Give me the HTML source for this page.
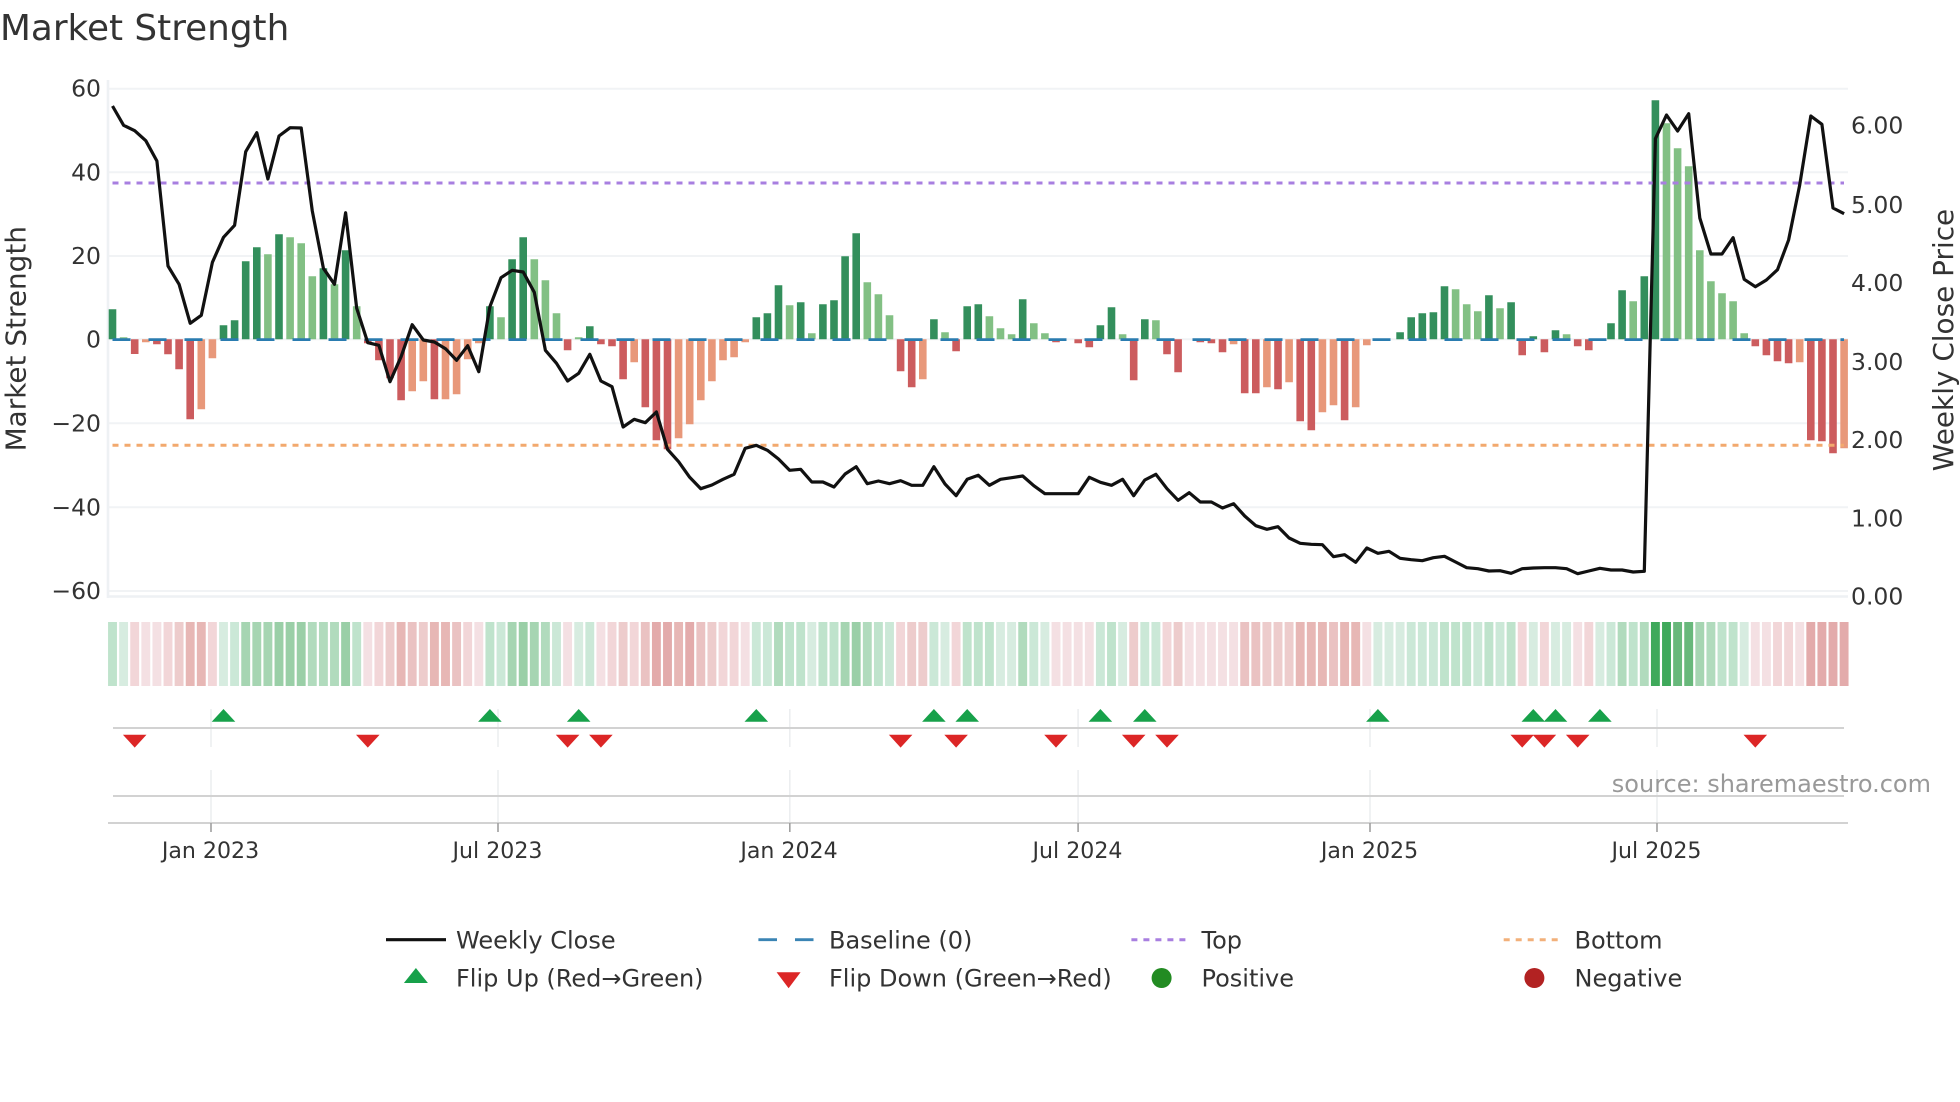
<!DOCTYPE html>
<html lang="en"><head><meta charset="utf-8"><title>Market Strength</title>
<style>
html,body{margin:0;padding:0;background:#fff;width:1960px;height:1102px;overflow:hidden}
svg{display:block}
text{font-family:"DejaVu Sans","Liberation Sans",sans-serif;fill:#333}
.y{font-size:23.5px}
.x{font-size:22.1px;text-anchor:middle}
.l{font-size:24px}
.bar,.heat,.zero{fill:none}
</style></head><body>
<svg width="1960" height="1102" viewBox="0 0 1960 1102" xmlns="http://www.w3.org/2000/svg">
<rect width="1960" height="1102" fill="#fff"/>
<text x="0" y="40" font-size="35.8">Market Strength</text>

<!-- grid -->
<path d="M108 88.7H1848M108 172.3H1848M108 256H1848M108 339.3H1848M108 423.3H1848M108 507.3H1848M108 591H1848" stroke="#f1f3f5" stroke-width="2" fill="none"/>
<path d="M108 80V598M107 596.5H1848" stroke="#eef1f4" stroke-width="2.6" fill="none"/>

<!-- bars -->
<path class="bar" stroke-width="7.6" stroke="#338f5c" d="M112.5 339.3v-30M223.5 339.3v-14M234.6 339.3v-19M245.7 339.3v-78M256.8 339.3v-92M279 339.3v-105M323.4 339.3v-71M345.6 339.3v-89M489.9 339.3v-33M512.1 339.3v-80M523.2 339.3v-102M589.8 339.3v-13M756.3 339.3v-22M767.4 339.3v-26M778.5 339.3v-54M800.7 339.3v-37M822.9 339.3v-35M834 339.3v-39M845.1 339.3v-83M856.2 339.3v-106M933.9 339.3v-20M967.2 339.3v-33M978.3 339.3v-35M1022.7 339.3v-40M1100.4 339.3v-14M1111.5 339.3v-32M1144.8 339.3v-20M1400.1 339.3v-7M1411.2 339.3v-22M1422.3 339.3v-26M1433.4 339.3v-27M1444.5 339.3v-53M1488.9 339.3v-44M1511.1 339.3v-37M1533.3 339.3v-3M1555.5 339.3v-9M1611 339.3v-16M1622.1 339.3v-49M1644.3 339.3v-63M1655.4 339.3v-239"/>
<path class="bar" stroke-width="7.6" stroke="#82c084" d="M123.6 339.3v-2M267.9 339.3v-85M290.1 339.3v-102M301.2 339.3v-96M312.3 339.3v-63M334.5 339.3v-55M356.7 339.3v-33M501 339.3v-22M534.3 339.3v-80M545.4 339.3v-59M556.5 339.3v-26M578.7 339.3v-2M789.6 339.3v-34M811.8 339.3v-6M867.3 339.3v-57M878.4 339.3v-45M889.5 339.3v-24M945 339.3v-7M989.4 339.3v-23M1000.5 339.3v-11M1011.6 339.3v-5M1033.8 339.3v-16M1044.9 339.3v-6M1122.6 339.3v-5M1155.9 339.3v-19M1455.6 339.3v-50M1466.7 339.3v-35M1477.8 339.3v-28M1500 339.3v-31M1566.6 339.3v-5M1633.2 339.3v-38M1666.5 339.3v-216M1677.6 339.3v-191M1688.7 339.3v-173M1699.8 339.3v-89M1710.9 339.3v-58M1722 339.3v-46M1733.1 339.3v-38M1744.2 339.3v-6"/>
<path class="bar" stroke-width="7.6" stroke="#cc5c5e" d="M134.7 339.3v14.7M156.9 339.3v5M168 339.3v15M179.1 339.3v30M190.2 339.3v80M367.8 339.3v4M378.9 339.3v21M390 339.3v39M401.1 339.3v61M434.4 339.3v60M567.6 339.3v11M600.9 339.3v5M612 339.3v7M623.1 339.3v40M645.3 339.3v68M656.4 339.3v101M667.5 339.3v110M900.6 339.3v32M911.7 339.3v48M956.1 339.3v12M1056 339.3v3M1078.2 339.3v4M1089.3 339.3v8M1133.7 339.3v41M1167 339.3v15M1178.1 339.3v33M1200.3 339.3v3M1211.4 339.3v4M1222.5 339.3v13M1244.7 339.3v54M1255.8 339.3v54M1278 339.3v50M1300.2 339.3v82M1311.3 339.3v91M1344.6 339.3v81M1522.2 339.3v16M1544.4 339.3v13M1577.7 339.3v7M1588.8 339.3v11M1755.3 339.3v7M1766.4 339.3v16M1777.5 339.3v22M1788.6 339.3v24M1810.8 339.3v101M1821.9 339.3v102M1833 339.3v114"/>
<path class="bar" stroke-width="7.6" stroke="#e8987a" d="M145.8 339.3v3M201.3 339.3v70M212.4 339.3v19M412.2 339.3v52M423.3 339.3v42M445.5 339.3v60M456.6 339.3v55M467.7 339.3v20M478.8 339.3v4M634.2 339.3v23M678.6 339.3v99M689.7 339.3v85M700.8 339.3v61M711.9 339.3v42M723 339.3v21M734.1 339.3v18M745.2 339.3v3M922.8 339.3v40M1233.6 339.3v5M1266.9 339.3v48M1289.1 339.3v43M1322.4 339.3v73M1333.5 339.3v66M1355.7 339.3v68M1366.8 339.3v6M1799.7 339.3v23M1844.1 339.3v109"/>

<!-- baseline / top / bottom -->
<path class="zero" d="M112.5 339.6H1844" stroke="#2a7cb0" stroke-width="2.8" stroke-dasharray="18 18"/>
<path d="M112.5 183H1844" fill="none" stroke="#a87fe0" stroke-width="3" stroke-dasharray="6 6"/>
<path d="M112.5 445.3H1844" fill="none" stroke="#f2a96e" stroke-width="3" stroke-dasharray="6 6"/>

<!-- weekly close -->
<polyline fill="none" stroke="#111" stroke-width="3.2" stroke-linejoin="round" points="112.5,106 123.6,125.3 134.7,130.7 145.8,140.7 156.9,161 168,266 179.1,284.3 190.2,323.3 201.3,315.3 212.4,262.3 223.5,237.3 234.6,225.3 245.7,151.7 256.8,132.7 267.9,179 279,136 290.1,127.7 301.2,128 312.3,211 323.4,268.3 334.5,284.3 345.6,212.7 356.7,308.3 367.8,342.7 378.9,345.3 390,381.7 401.1,356.7 412.2,324.7 423.3,340 434.4,342 445.5,348.7 456.6,360.3 467.7,345.7 478.8,371.7 489.9,306.7 501,277.7 512.1,270.3 523.2,272 534.3,292.3 545.4,350.3 556.5,363.3 567.6,381 578.7,373.3 589.8,354.3 600.9,381 612,386.7 623.1,427 634.2,419.3 645.3,422.7 656.4,412 667.5,449.3 678.6,461.7 689.7,477.3 700.8,488.7 711.9,485 723,479.3 734.1,474.3 745.2,448.3 756.3,445.3 767.4,450.3 778.5,459 789.6,470.3 800.7,469.3 811.8,482 822.9,482 834,487 845.1,474 856.2,466.7 867.3,483.7 878.4,481 889.5,483.7 900.6,480.7 911.7,485.3 922.8,485.3 933.9,466.7 945,484 956.1,495.7 967.2,479.3 978.3,475.3 989.4,485.3 1000.5,479.3 1011.6,477.7 1022.7,476 1033.8,485.7 1044.9,493.7 1056,493.7 1067.1,493.7 1078.2,493.7 1089.3,477.3 1100.4,482.3 1111.5,485.3 1122.6,479.3 1133.7,495.7 1144.8,480 1155.9,474.3 1167,488.7 1178.1,500.3 1189.2,492.7 1200.3,502 1211.4,502 1222.5,508 1233.6,503.7 1244.7,516 1255.8,525.7 1266.9,529.3 1278,526.7 1289.1,538 1300.2,543.3 1311.3,544.3 1322.4,544.7 1333.5,556.7 1344.6,554.7 1355.7,562.3 1366.8,548 1377.9,553.3 1389,551.3 1400.1,558.3 1411.2,559.7 1422.3,560.7 1433.4,557.7 1444.5,556.3 1455.6,562 1466.7,567.7 1477.8,568.7 1488.9,571 1500,570.7 1511.1,573.3 1522.2,568.7 1533.3,568 1544.4,567.7 1555.5,567.7 1566.6,568.7 1577.7,573.7 1588.8,571 1599.9,568.3 1611,570 1622.1,570 1633.2,572 1644.3,571.3 1655.4,138.7 1666.5,115 1677.6,131 1688.7,113.7 1699.8,218 1710.9,254 1722,254 1733.1,237.7 1744.2,279.3 1755.3,286.7 1766.4,280 1777.5,269.7 1788.6,240 1799.7,185 1810.8,116 1821.9,124.3 1833,208 1844.1,213.7"/>

<!-- y ticks -->
<g class="y" text-anchor="end">
<text x="101" y="96.7">60</text><text x="101" y="180.3">40</text><text x="101" y="264">20</text><text x="101" y="347.3">0</text><text x="101" y="431.3">−20</text><text x="101" y="515.3">−40</text><text x="101" y="598.8">−60</text>
</g>
<g class="y">
<text x="1851" y="133.5">6.00</text><text x="1851" y="212.8">5.00</text><text x="1851" y="290.8">4.00</text><text x="1851" y="370.2">3.00</text><text x="1851" y="447.8">2.00</text><text x="1851" y="526.5">1.00</text><text x="1851" y="604.5">0.00</text>
</g>
<text transform="translate(25.5 338.7) rotate(-90)" text-anchor="middle" font-size="27.9">Market Strength</text>
<text transform="translate(1953 340) rotate(-90)" text-anchor="middle" font-size="27.9">Weekly Close Price</text>

<!-- heat strip -->
<g class="heat" stroke-width="8.9">
<g opacity="0.9">
<path stroke="#d3ebdd" d="M123.6 622V686M223.5 622V686M578.7 622V686M811.8 622V686M945 622V686M1000.5 622V686M1011.6 622V686M1044.9 622V686M1122.6 622V686M1377.9 622V686M1389 622V686M1400.1 622V686M1533.3 622V686M1555.5 622V686M1566.6 622V686M1599.9 622V686M1744.2 622V686"/>
<path stroke="#c6e6d3" d="M234.6 622V686M501 622V686M556.5 622V686M589.8 622V686M756.3 622V686M767.4 622V686M889.5 622V686M933.9 622V686M1033.8 622V686M1100.4 622V686M1144.8 622V686M1155.9 622V686M1411.2 622V686M1422.3 622V686M1433.4 622V686M1477.8 622V686M1500 622V686M1611 622V686"/>
<path stroke="#b9e0c7" d="M112.5 622V686M356.7 622V686M489.9 622V686M789.6 622V686M800.7 622V686M822.9 622V686M834 622V686M878.4 622V686M967.2 622V686M978.3 622V686M989.4 622V686M1111.5 622V686M1444.5 622V686M1455.6 622V686M1466.7 622V686M1488.9 622V686M1511.1 622V686M1633.2 622V686M1722 622V686M1733.1 622V686"/>
<path stroke="#a9d8b6" d="M312.3 622V686M323.4 622V686M334.5 622V686M545.4 622V686M778.5 622V686M867.3 622V686M1022.7 622V686M1622.1 622V686M1644.3 622V686M1710.9 622V686"/>
<path stroke="#9dd1aa" d="M245.7 622V686M256.8 622V686M267.9 622V686M512.1 622V686M534.3 622V686M845.1 622V686M1699.8 622V686"/>
<path stroke="#90ca9e" d="M279 622V686M290.1 622V686M301.2 622V686M345.6 622V686M523.2 622V686M856.2 622V686"/>
<path stroke="#f3dde0" d="M145.8 622V686M156.9 622V686M367.8 622V686M478.8 622V686M567.6 622V686M600.9 622V686M745.2 622V686M1056 622V686M1067.1 622V686M1078.2 622V686M1089.3 622V686M1189.2 622V686M1200.3 622V686M1211.4 622V686M1222.5 622V686M1233.6 622V686M1366.8 622V686M1577.7 622V686M1755.3 622V686M1766.4 622V686M1799.7 622V686"/>
<path stroke="#f1d2d4" d="M134.7 622V686M168 622V686M212.4 622V686M378.9 622V686M467.7 622V686M612 622V686M634.2 622V686M723 622V686M734.1 622V686M900.6 622V686M956.1 622V686M1167 622V686M1522.2 622V686M1544.4 622V686M1588.8 622V686M1777.5 622V686M1788.6 622V686"/>
<path stroke="#ecc7c7" d="M179.1 622V686M390 622V686M423.3 622V686M623.1 622V686M711.9 622V686M911.7 622V686M922.8 622V686M1133.7 622V686M1178.1 622V686M1266.9 622V686M1278 622V686M1289.1 622V686"/>
<path stroke="#e8bcbc" d="M412.2 622V686M456.6 622V686M645.3 622V686M700.8 622V686M1244.7 622V686M1255.8 622V686M1333.5 622V686"/>
<path stroke="#e5b0ae" d="M190.2 622V686M201.3 622V686M401.1 622V686M434.4 622V686M445.5 622V686M678.6 622V686M1300.2 622V686M1311.3 622V686M1322.4 622V686M1344.6 622V686M1355.7 622V686"/>
<path stroke="#e0a3a2" d="M656.4 622V686M667.5 622V686M689.7 622V686M1810.8 622V686M1821.9 622V686M1833 622V686M1844.1 622V686"/>
</g>
<path stroke="#68b87b" d="M1677.6 622V686M1688.7 622V686"/>
<path stroke="#3fa95b" d="M1655.4 622V686M1666.5 622V686"/>
</g>

<!-- marker panel -->
<path d="M211 709V747M211 770V823M498 709V747M498 770V823M789.8 709V747M789.8 770V823M1078.1 709V747M1078.1 770V823M1370 709V747M1370 770V823M1657 709V747M1657 770V823" stroke="#eceef0" stroke-width="1.6" fill="none"/>
<path d="M113 728H1844M113 796H1844M108 823H1848" stroke="#d2d2d2" stroke-width="2" fill="none"/>
<path d="M211 823v9M498 823v9M789.8 823v9M1078.1 823v9M1370 823v9M1657 823v9" stroke="#a0a0a0" stroke-width="1.6" fill="none"/>
<path fill="#17a14a" d="M223.5 709l11.8 12.7h-23.6zM489.9 709l11.8 12.7h-23.6zM578.7 709l11.8 12.7h-23.6zM756.3 709l11.8 12.7h-23.6zM933.9 709l11.8 12.7h-23.6zM967.2 709l11.8 12.7h-23.6zM1100.4 709l11.8 12.7h-23.6zM1144.8 709l11.8 12.7h-23.6zM1377.9 709l11.8 12.7h-23.6zM1533.3 709l11.8 12.7h-23.6zM1555.5 709l11.8 12.7h-23.6zM1599.9 709l11.8 12.7h-23.6z"/>
<path fill="#dc2626" d="M134.7 747.6l-11.8-12.9h23.6zM367.8 747.6l-11.8-12.9h23.6zM567.6 747.6l-11.8-12.9h23.6zM600.9 747.6l-11.8-12.9h23.6zM900.6 747.6l-11.8-12.9h23.6zM956.1 747.6l-11.8-12.9h23.6zM1056 747.6l-11.8-12.9h23.6zM1133.7 747.6l-11.8-12.9h23.6zM1167 747.6l-11.8-12.9h23.6zM1522.2 747.6l-11.8-12.9h23.6zM1544.4 747.6l-11.8-12.9h23.6zM1577.7 747.6l-11.8-12.9h23.6zM1755.3 747.6l-11.8-12.9h23.6z"/>

<text x="1931" y="792" font-size="24" text-anchor="end" style="fill:#999">source: sharemaestro.com</text>

<!-- x ticks -->
<g class="x">
<text x="210.5" y="857.8">Jan 2023</text><text x="497.5" y="857.8">Jul 2023</text><text x="789" y="857.8">Jan 2024</text><text x="1077.5" y="857.8">Jul 2024</text><text x="1369.5" y="857.8">Jan 2025</text><text x="1656.5" y="857.8">Jul 2025</text>
</g>

<!-- legend -->
<path d="M386 939.7H446" stroke="#111" stroke-width="3.2" fill="none"/>
<path d="M758.4 939.7H777M795 939.7H813.5" stroke="#3a84b4" stroke-width="2.8" fill="none"/>
<path d="M1131.4 939.7H1186" stroke="#a87fe0" stroke-width="3" stroke-dasharray="6 6" fill="none"/>
<path d="M1503.7 939.7H1558.5" stroke="#f2b07a" stroke-width="3" stroke-dasharray="6 6" fill="none"/>
<path fill="#17a14a" d="M415.9 968l12 15h-24z"/>
<path fill="#dc2626" d="M788.6 988.3l-12-16h24z"/>
<ellipse cx="1161.6" cy="978" rx="10" ry="10" fill="#228b22"/>
<ellipse cx="1534.4" cy="978" rx="10" ry="10" fill="#b22222"/>
<g class="l">
<text x="456" y="948.6">Weekly Close</text>
<text x="829" y="948.6">Baseline (0)</text>
<text x="1201.5" y="948.6">Top</text>
<text x="1574.5" y="948.6">Bottom</text>
<text x="456" y="986.6">Flip Up (Red→Green)</text>
<text x="829" y="986.6">Flip Down (Green→Red)</text>
<text x="1201.5" y="986.6">Positive</text>
<text x="1574.5" y="986.6">Negative</text>
</g>
</svg>
</body></html>
